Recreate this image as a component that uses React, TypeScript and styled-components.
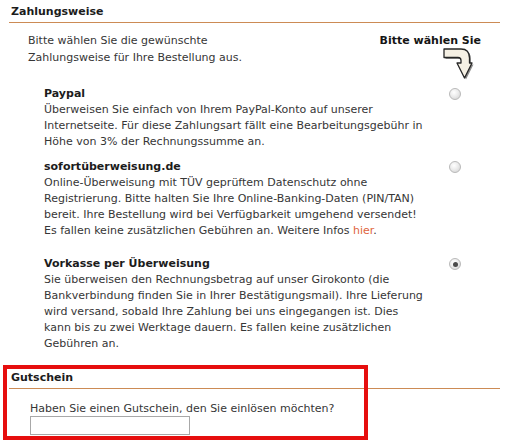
import * as React from "react";
import styled, { createGlobalStyle } from "styled-components";

const GlobalStyle = createGlobalStyle`
  body {
    margin: 0;
    background: #ffffff;
    font-family: "DejaVu Sans", Verdana, sans-serif;
    font-size: 11px;
    color: #363636;
  }
`;

const Page = styled.div`
  position: relative;
  width: 509px;
  height: 440px;
  overflow: hidden;
  padding-top: 4px;
  box-sizing: border-box;
`;

const SectionTitle = styled.div`
  margin: 0 9px;
  padding: 0 0 3px 2px;
  line-height: 15px;
  font-weight: bold;
  color: #1c1c1c;
  border-bottom: 1px solid #cc8b55;
`;

const Intro = styled.div`
  display: flex;
  justify-content: space-between;
  padding: 9px 28px 0 28px;
  line-height: 17px;
`;

const IntroText = styled.div`
  white-space: nowrap;
`;

const Hint = styled.div`
  display: flex;
  flex-direction: column;
  align-items: flex-end;
  font-weight: bold;
  color: #151515;
`;

const ArrowWrap = styled.div`
  margin: -2px 7px 0 0;
  height: 34px;
`;

const OptionList = styled.div`
  display: flex;
  flex-direction: column;
  padding: 5px 0 0 44px;
`;

const Option = styled.div<{ $gapAfter: number }>`
  display: grid;
  grid-template-columns: 405px 14px;
  align-items: start;
  margin-bottom: ${(p) => p.$gapAfter}px;
  line-height: 16px;
`;

const OptionTitle = styled.div`
  font-weight: bold;
  color: #1c1c1c;
`;

const Line = styled.span`
  display: block;
  white-space: nowrap;
`;

const Link = styled.a`
  color: #e0643d;
  text-decoration: none;
`;

const Radio = styled.span<{ $checked?: boolean }>`
  position: relative;
  margin-top: 2px;
  width: 12px;
  height: 12px;
  border-radius: 50%;
  box-sizing: border-box;
  border: 1px solid #b9b9b9;
  background: radial-gradient(circle at 40% 35%, #ffffff 0%, #ececec 45%, #cfcfcf 100%);

  &::after {
    content: "";
    display: ${(p) => (p.$checked ? "block" : "none")};
    position: absolute;
    left: 2.5px;
    top: 2.5px;
    width: 5px;
    height: 5px;
    border-radius: 50%;
    background: #4a4a4a;
  }
`;

const VoucherSection = styled.div`
  margin-top: 18px;
`;

const VoucherBody = styled.div`
  display: flex;
  flex-direction: column;
  align-items: flex-start;
  padding: 12px 0 0 30px;
  line-height: 15px;
`;

const VoucherInput = styled.input`
  width: 160px;
  height: 19px;
  box-sizing: border-box;
  margin: 0;
  border: 1px solid #a8a8a8;
  background: #fff;
`;

const Highlight = styled.div`
  position: absolute;
  left: 3px;
  top: 365px;
  width: 365px;
  height: 75px;
  box-sizing: border-box;
  border: 4px solid #e60e0e;
  pointer-events: none;
`;

function CurvedArrow() {
  const d =
    "M2 2 H19 Q27.5 2 27.5 11 V16 H30 L22.5 31 L15 16 H19 V13.5 Q19 10.5 16 10.5 H2 Z";
  return (
    <svg width="32" height="34" viewBox="0 0 32 34">
      <path d={d} transform="translate(1.5 1.5)" fill="#8c8c8c" />
      <path d={d} fill="#f5f0e4" stroke="#262626" strokeWidth="1.3" strokeLinejoin="round" />
    </svg>
  );
}

interface IPaymentOption {
  title: string;
  lines: React.ReactNode[];
  checked?: boolean;
  gapAfter: number;
}

const options: IPaymentOption[] = [
  {
    title: "Paypal",
    lines: [
      "Überweisen Sie einfach von Ihrem PayPal-Konto auf unserer",
      "Internetseite. Für diese Zahlungsart fällt eine Bearbeitungsgebühr in",
      "Höhe von 3% der Rechnungssumme an.",
    ],
    gapAfter: 9,
  },
  {
    title: "sofortüberweisung.de",
    lines: [
      "Online-Überweisung mit TÜV geprüftem Datenschutz ohne",
      "Registrierung. Bitte halten Sie Ihre Online-Banking-Daten (PIN/TAN)",
      "bereit. Ihre Bestellung wird bei Verfügbarkeit umgehend versendet!",
      <>
        Es fallen keine zusätzlichen Gebühren an. Weitere Infos <Link href="#">hier</Link>.
      </>,
    ],
    gapAfter: 17,
  },
  {
    title: "Vorkasse per Überweisung",
    lines: [
      "Sie überweisen den Rechnungsbetrag auf unser Girokonto (die",
      "Bankverbindung finden Sie in Ihrer Bestätigungsmail). Ihre Lieferung",
      "wird versand, sobald Ihre Zahlung bei uns eingegangen ist. Dies",
      "kann bis zu zwei Werktage dauern. Es fallen keine zusätzlichen",
      "Gebühren an.",
    ],
    checked: true,
    gapAfter: 0,
  },
];

export default function App() {
  return (
    <Page>
      <GlobalStyle />
      <SectionTitle>Zahlungsweise</SectionTitle>
      <Intro>
        <IntroText>
          Bitte wählen Sie die gewünschte
          <br />
          Zahlungsweise für Ihre Bestellung aus.
        </IntroText>
        <Hint>
          Bitte wählen Sie
          <ArrowWrap>
            <CurvedArrow />
          </ArrowWrap>
        </Hint>
      </Intro>
      <OptionList>
        {options.map((option, index) => (
          <Option key={index} $gapAfter={option.gapAfter}>
            <div>
              <OptionTitle>{option.title}</OptionTitle>
              {option.lines.map((line, i) => (
                <Line key={i}>{line}</Line>
              ))}
            </div>
            <Radio $checked={option.checked} />
          </Option>
        ))}
      </OptionList>
      <VoucherSection>
        <SectionTitle>Gutschein</SectionTitle>
        <VoucherBody>
          Haben Sie einen Gutschein, den Sie einlösen möchten?
          <VoucherInput type="text" />
        </VoucherBody>
      </VoucherSection>
      <Highlight />
    </Page>
  );
}
